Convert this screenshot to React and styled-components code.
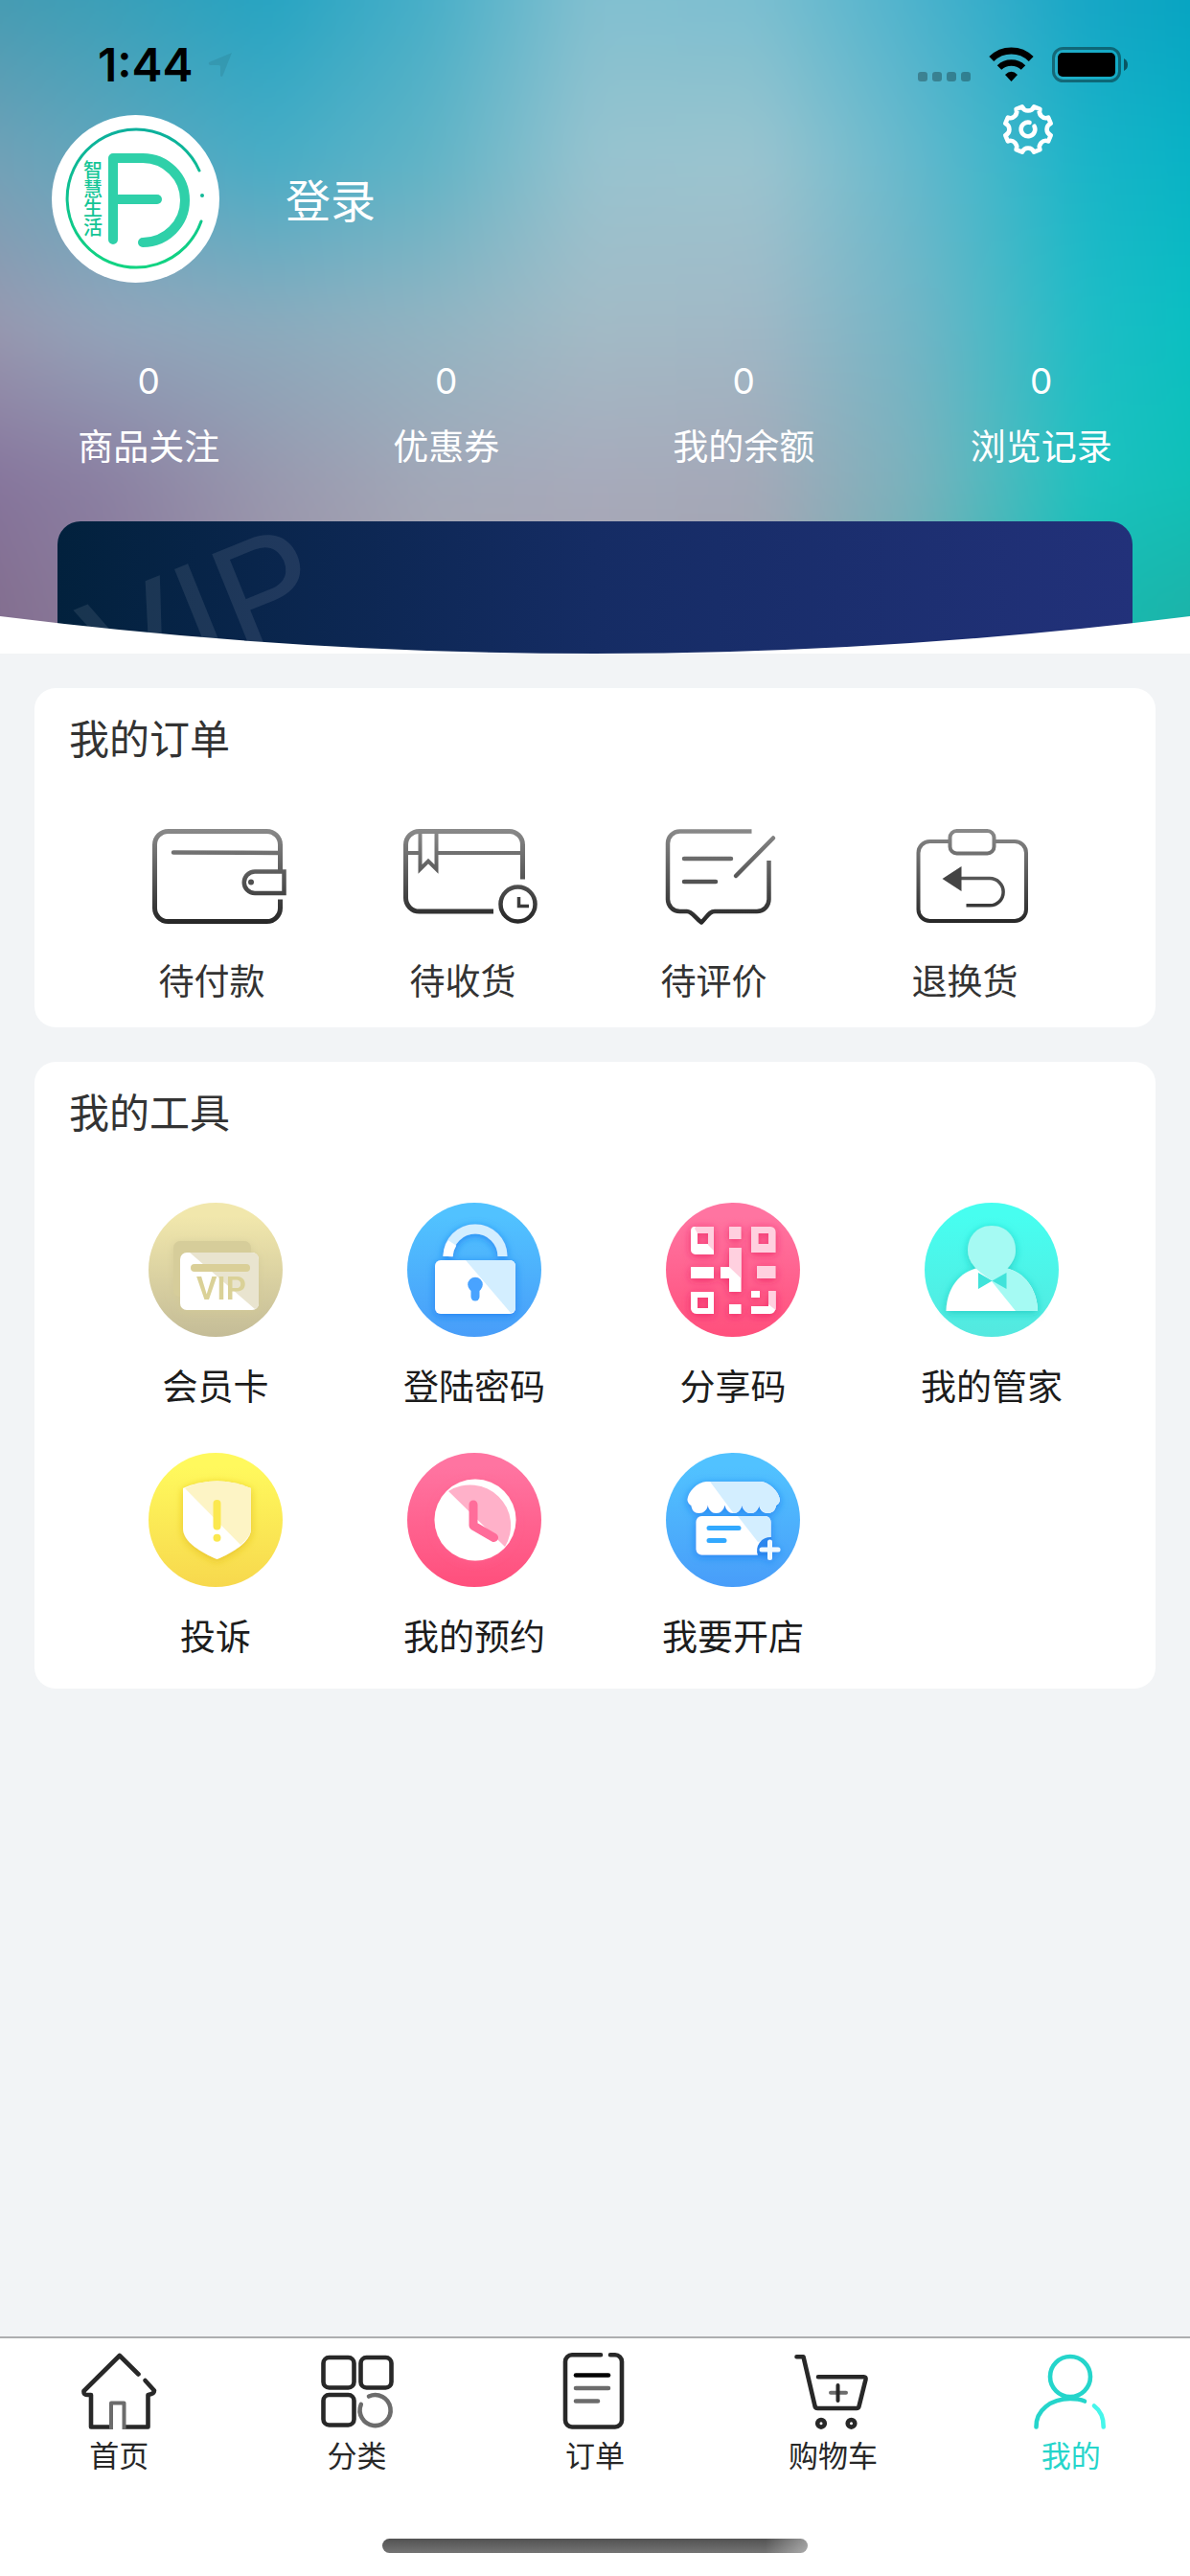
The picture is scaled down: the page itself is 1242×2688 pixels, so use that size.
import React from 'react';
import styled, { createGlobalStyle } from 'styled-components';

const GlobalStyle = createGlobalStyle`
  * {
    box-sizing: border-box;
  }

  body {
    margin: 0;
    background: #f2f4f6;
    color: #333;
    font-family: 'Noto Sans CJK SC', 'Liberation Sans', sans-serif;
  }

  a {
    color: inherit;
    text-decoration: none;
  }

  button {
    padding: 0;
    border: none;
    background: none;
    color: inherit;
    font: inherit;
    cursor: pointer;
  }

  svg {
    display: block;
  }
`;

// Page shell
const Page = styled.div`
  display: flex;
  flex-direction: column;
  min-height: 100vh;
`;

const Header = styled.header`
  position: relative;
  isolation: isolate;
  display: flex;
  flex-direction: column;
  overflow: hidden;
  color: #fff;
`;

// Soft colour field behind the header, larger than it so the blur has no pale edge
const Backdrop = styled.div`
  position: absolute;
  inset: -60px;
  z-index: -1;
  filter: blur(24px);
`;

// One horizontal colour band of the backdrop, faded in from the band above it
const Wash = styled.div`
  position: absolute;
  inset: 0;
  background: linear-gradient(90deg, ${(props) => props.$colors});
  mask-image: linear-gradient(180deg, transparent ${(props) => props.$from}, #000 ${(props) => props.$to});
`;

const StatusBar = styled.div`
  display: flex;
  align-items: center;
  gap: 19px;
  height: 108px;
  padding: 28px 65px 0 102px;
  color: #000;
`;

const Clock = styled.span`
  font-family: Inter, 'Liberation Sans', sans-serif;
  font-size: 48px;
  font-weight: 600;
  line-height: 48px;
`;

const LocationArrow = styled.svg`
  margin: 0 auto 0 -4px;
`;

const Profile = styled.div`
  display: flex;
  align-items: flex-start;
  padding: 0 142px 0 54px;
`;

const Avatar = styled.div`
  flex: none;
  width: 175px;
  height: 175px;
  margin-top: 12px;
  border-radius: 50%;
  background: #fff;
`;

const LoginLink = styled.a`
  margin: 67px auto 0 69px;
  font-size: 47px;
  line-height: 64px;
`;

const Stats = styled.ul`
  display: grid;
  grid-template-columns: repeat(4, 1fr);
  margin: 79px 0 0;
  padding: 0;
  list-style: none;
`;

const Stat = styled.li`
  display: flex;
  flex-direction: column;
  gap: 18px;
  text-align: center;
  font-size: 37px;
  line-height: 48px;
`;

const StatValue = styled.span`
  font-family: Inter, 'Liberation Sans', sans-serif;
`;

const VipCard = styled.div`
  height: 138px;
  margin: 56px 60px 0;
  overflow: hidden;
  border-radius: 24px 24px 0 0;
  background: linear-gradient(90deg, #02213d, #152c64 50%, #22317a);
`;

const Curve = styled.svg`
  position: absolute;
  left: 0;
  bottom: 0;
  width: 100%;
  height: 39px;
`;

const Main = styled.main`
  display: flex;
  flex: 1;
  flex-direction: column;
  gap: 36px;
  padding: 36px;
`;

const Card = styled.section`
  padding: 22px 36px 26px;
  border-radius: 22px;
  background: #fff;
`;

const CardTitle = styled.h2`
  margin: 0 0 67px;
  font-size: 42px;
  font-weight: 400;
  line-height: 58px;
`;

const OrderGrid = styled.div`
  display: grid;
  grid-template-columns: repeat(4, 1fr);
  padding: 0 32px 0 18px;
`;

const OrderItem = styled.a`
  display: flex;
  flex-direction: column;
  align-items: center;
  gap: 33px;
  font-size: 37px;
  line-height: 48px;

  svg {
    margin-left: 16px;
  }
`;

const ToolGrid = styled.div`
  display: grid;
  grid-template-columns: repeat(4, 1fr);
  row-gap: 47px;
  padding: 0 0 6px 18px;
`;

const ToolItem = styled.a`
  display: flex;
  flex-direction: column;
  align-items: center;
  gap: 26px;
  color: #1c1c1c;
  font-size: 37px;
  line-height: 48px;
`;

const TabBar = styled.footer`
  display: flex;
  flex-direction: column;
  align-items: center;
  padding: 15px 0 24px;
  border-top: 2px solid #adaeb0;
  background: #fff;
`;

const Tabs = styled.nav`
  display: grid;
  grid-template-columns: repeat(5, 1fr);
  width: 100%;
`;

const Tab = styled.a`
  display: flex;
  flex-direction: column;
  align-items: center;
  gap: 6px;
  color: ${(props) => (props.$active ? '#25d5cb' : '#282828')};
  font-size: 31px;
  line-height: 40px;
`;

const HomeIndicator = styled.div`
  width: 444px;
  height: 15px;
  margin-top: 68px;
  border-radius: 8px;
  background: linear-gradient(90deg, transparent 90%, rgba(255, 255, 255, 0.4)),
    linear-gradient(180deg, #525252, #747474);
`;

const washes = [
  {
    colors: '#4a9ab0, #3a9fb8, #25a4c2, #48afc8, #83c0d0, #7bbfd0, #4ab2cc, #17a6c6, #00a3c0',
    from: '-1%',
    to: '0%',
  },
  {
    colors: '#7a9fb5, #62a7bd, #48adc6, #62b4c6, #98c3cf, #9cc4cf, #62b8cc, #1ab5c8, #00b2c4',
    from: '7%',
    to: '29%',
  },
  {
    colors: '#9a93ab, #94a4ba, #8cabbd, #92b4c2, #a3bbc6, #a0b8c6, #70b5c6, #1fbdc6, #00c0c0',
    from: '29%',
    to: '50%',
  },
  {
    colors: '#84709a, #8b80a2, #9898ae, #a2a8b8, #a7aabb, #a4a9b8, #78b2bd, #1fc2c0, #08c0b4',
    from: '50%',
    to: '70%',
  },
  {
    colors: '#80698a, #8a7a9a, #9d93a8, #a8a4b0, #a8a4b0, #a2a4b0, #6ab0b4, #16baaf, #20b0a6',
    from: '70%',
    to: '87%',
  },
];

// Gear outline: eight blunt teeth joined by inward arcs
const gearPath = () => {
  const point = (deg) => {
    const a = (deg * Math.PI) / 180;
    return `${(27 + 24.5 * Math.cos(a)).toFixed(2)} ${(27 + 24.5 * Math.sin(a)).toFixed(2)}`;
  };
  let d = '';
  for (let i = 0; i < 8; i++) {
    const mid = 22.5 + i * 45;
    d += `${i === 0 ? 'M' : 'A6.6 6.6 0 0 0 '}${point(mid - 8)}L${point(mid + 8)}`;
  }
  return `${d}A6.6 6.6 0 0 0 ${point(14.5)}Z`;
};

const Logo = () => (
  <svg width="175" height="175" viewBox="0 0 175 175" fill="none">
    <defs>
      <linearGradient id="ring" x1="0" y1="0" x2="0" y2="1">
        <stop offset="0" stopColor="#0cb09c" />
        <stop offset="1" stopColor="#12d482" />
      </linearGradient>
    </defs>
    <path d="M154 58A72 72 0 1 0 156 111" stroke="url(#ring)" strokeWidth="3" strokeLinecap="round" />
    <circle cx="157" cy="84" r="2" fill="#12b998" />
    <g stroke="#2fd0a9" strokeWidth="10" strokeLinecap="round" strokeLinejoin="round">
      <path d="M64 130V45H95A44 44 0 0 1 95 133" />
      <path d="M64 88H110" />
    </g>
    <text x="43" y="47" fill="#14c596" fontSize="20" fontWeight="500" writingMode="vertical-rl">
      智慧生活
    </text>
  </svg>
);

// Order icons share a vertical grey fade
const OrderIcon = ({ id, children }) => (
  <svg
    width="140"
    height="100"
    viewBox="0 0 140 100"
    fill="none"
    stroke={`url(#${id})`}
    strokeWidth="5"
    strokeLinecap="round"
    strokeLinejoin="round"
  >
    <defs>
      <linearGradient id={id} gradientUnits="userSpaceOnUse" x1="0" y1="0" x2="0" y2="99">
        <stop offset="0" stopColor="#8a8a8a" />
        <stop offset="1" stopColor="#262626" />
      </linearGradient>
    </defs>
    {children}
  </svg>
);

const orders = [
  {
    name: '待付款',
    icon: (
      <OrderIcon id="pay">
        <path
          strokeLinecap="butt"
          d="M133.500 43V16.500A14 14 0 0 0 119.500 2.500H16.500A14 14 0 0 0 2.500 16.500V82.500A14 14 0 0 0 16.500 96.500H119.500A14 14 0 0 0 133.500 82.500V73.500"
        />
        <path d="M22 24.500L133 25" strokeWidth="4.500" />
        <path d="M137.500 44.500H107A11.200 11.200 0 0 0 107 67H137.500Z" strokeWidth="4.500" strokeLinejoin="miter" />
        <circle cx="103" cy="55.500" r="3" fill="#505050" stroke="none" />
      </OrderIcon>
    ),
  },
  {
    name: '待收货',
    icon: (
      <OrderIcon id="receive">
        <path
          strokeLinecap="butt"
          d="M124.500 52.500V16.500A14 14 0 0 0 110.500 2.500H16.500A14 14 0 0 0 2.500 16.500V72A14 14 0 0 0 16.500 86H94"
        />
        <path d="M17.500 3V42L26 33.500L34.500 42V3" strokeWidth="4" strokeLinejoin="miter" />
        <path d="M2.500 25H17.500M34.500 25H124" strokeWidth="4" strokeLinecap="butt" />
        <circle cx="119.500" cy="78.500" r="18" strokeWidth="4.500" />
        <path d="M120.500 71V80.500H131" strokeWidth="3.500" strokeLinecap="butt" strokeLinejoin="miter" />
      </OrderIcon>
    ),
  },
  {
    name: '待评价',
    icon: (
      <OrderIcon id="review">
        <path
          strokeWidth="4.500"
          strokeLinecap="butt"
          d="M101.500 2.500H26.500A12.500 12.500 0 0 0 14 15V73.500A12.500 12.500 0 0 0 26.500 86H34C39 86 42 92 49 97.500C55 92 57 86 63 86H107A12.500 12.500 0 0 0 119.500 73.500V33"
        />
        <path d="M31 31H80M31 55H64" strokeWidth="4.500" />
        <path d="M85 49L124 9.500" strokeWidth="4.500" />
      </OrderIcon>
    ),
  },
  {
    name: '退换货',
    icon: (
      <OrderIcon id="refund">
        <path
          strokeWidth="4"
          d="M46 13H25.500A12 12 0 0 0 13.500 25V84A12 12 0 0 0 25.500 96H114A12 12 0 0 0 126 84V25A12 12 0 0 0 114 13H93"
        />
        <rect x="46.500" y="2" width="46" height="23.500" rx="7" strokeWidth="4" />
        <path d="M58 51.500H88A14 14 0 0 1 88 79.800H63.500" strokeWidth="3.500" strokeLinecap="butt" />
        <path d="M38.500 52L58.500 39V65Z" fill="#444" stroke="none" />
      </OrderIcon>
    ),
  },
];

// Round tool badge with its gradient; shade is the colour of the soft shadow
const Badge = ({ id, from, to, shade, children }) => (
  <svg width="140" height="140" viewBox="0 0 140 140" fill="none">
    <defs>
      <linearGradient id={id} x1="0" y1="0" x2="0" y2="1">
        <stop offset="0.1" stopColor={from} />
        <stop offset="1" stopColor={to} />
      </linearGradient>
      <filter id={`${id}-shadow`} x="-20%" y="-20%" width="140%" height="150%">
        <feDropShadow dx="0" dy="2" stdDeviation="4" floodColor={shade} floodOpacity="0.8" />
      </filter>
    </defs>
    <circle cx="70" cy="70" r="70" fill={`url(#${id})`} />
    <g filter={`url(#${id}-shadow)`}>{children}</g>
  </svg>
);

const tools = [
  {
    name: '会员卡',
    icon: (
      <Badge id="vip" from="#f1e7ac" to="#c4bc97" shade="#d2c995">
        <rect x="26" y="40" width="81" height="58" rx="7" fill="#d6cd9a" />
        <rect x="33" y="52" width="82" height="60" rx="7" fill="#fff" />
        <path d="M43 52H108A7 7 0 0 1 115 59V105A7 7 0 0 1 111 111Z" fill="#e9e4cf" />
        <rect x="44" y="64" width="62" height="8" rx="4" fill="#dacf98" />
        <text x="76" y="101" fill="#dad197" fontFamily="Roboto, sans-serif" fontSize="33" fontWeight="600" textAnchor="middle">
          VIP
        </text>
      </Badge>
    ),
  },
  {
    name: '登陆密码',
    icon: (
      <Badge id="lock" from="#51c2ff" to="#489df9" shade="#167cf0">
        <path d="M42.500 56A28.500 28.500 0 0 1 99.500 56" stroke="#d3eeff" strokeWidth="10" />
        <path d="M42.500 56A28.500 28.500 0 0 1 47 42" stroke="#fff" strokeWidth="10" />
        <rect x="29" y="60" width="84" height="56" rx="6" fill="#fff" />
        <path d="M61 60H107A6 6 0 0 1 113 66V110Q113 114 108 115Z" fill="#d3eeff" />
        <circle cx="71" cy="85.500" r="7.800" fill="#4aa3ff" />
        <path d="M71 87V98" stroke="#4aa3ff" strokeWidth="9" strokeLinecap="round" />
      </Badge>
    ),
  },
  {
    name: '分享码',
    icon: (
      <Badge id="share" from="#ff74a1" to="#ff4f7c" shade="#ec2260">
        <g fill="#fff" fillRule="evenodd">
          <path d="M30 25H50V54H31A5 5 0 0 1 26 49V30Q26 25 30 25ZM33 32V43H44V32Z" />
          <path d="M26 67H50V79H26ZM57 67H66V47H78.500V93H66V79H57Z" />
          <path d="M26 93H50V116H32A6 6 0 0 1 26 110ZM33 99V110H44V99Z" />
          <path d="M66 106H78.500V116H66ZM89 92H98V99H89ZM107 92H114.500V110A6 6 0 0 1 108.500 116H89V108H107Z" />
        </g>
        <g fill="#ffd0df" fillRule="evenodd">
          <path d="M30 27L31 25H50V50L44 44V32H33Z" />
          <path d="M66 25H78.500V38H66ZM66 47H78.500V79L66 67Z" />
          <path d="M89 25H109A5.500 5.500 0 0 1 114.500 30.500V52H89ZM96.500 32V43H107V32Z" />
          <path d="M95 66H114.500V79H95ZM107 92H114.500V112L107 106Z" />
        </g>
      </Badge>
    ),
  },
  {
    name: '我的管家',
    icon: (
      <Badge id="butler" from="#47fef0" to="#54e8df" shade="#1cc8be">
        <path d="M22.500 113C23 90 36 72 56 68H84C104 72 117.500 90 118 113Z" fill="#fff" />
        <path d="M70 82L95 113H118C117.500 90 104 72 84 68L70 70Z" fill="#a5faf3" />
        <path d="M70 24C85 24 95 35 95 50C95 63 83 73 70 81C57 73 45 63 45 50C45 35 55 24 70 24Z" fill="#a5faf3" />
        <path d="M56 73L70.500 81.500L85.500 73V90L70.500 81.500L56 90Z" fill="#3fe3da" />
      </Badge>
    ),
  },
  {
    name: '投诉',
    icon: (
      <Badge id="complain" from="#fff95d" to="#f7d84d" shade="#e2bd1c">
        <path d="M36 37Q53 29.500 71.500 29.500Q90 29.500 107 37V79C107 93 88 104 71.500 111C55 104 36 93 36 79Z" fill="#fff" />
        <path d="M38 37Q53 29.500 71.500 29.500Q90 29.500 107 37V79C107 85 103 90 96 96Z" fill="#fdf4c5" />
        <path d="M71.500 53V76.500" stroke="#fbe850" strokeWidth="8" strokeLinecap="round" />
        <circle cx="71.500" cy="88.700" r="4" fill="#fbe850" />
      </Badge>
    ),
  },
  {
    name: '我的预约',
    icon: (
      <Badge id="booking" from="#ff74a1" to="#ff4f7c" shade="#ff5f8e">
        <circle cx="71" cy="70" r="42.500" fill="#fff" />
        <path d="M43 40A42.500 42.500 0 0 1 102 98Z" fill="#ffb1c9" />
        <path d="M69 54V76L90.500 88.500" stroke="#ff6d9a" strokeWidth="9" strokeLinecap="round" strokeLinejoin="round" />
      </Badge>
    ),
  },
  {
    name: '我要开店',
    icon: (
      <Badge id="shop" from="#51c2ff" to="#489df9" shade="#167cf0">
        <path
          d="M42 30H99C109 31 119 42 119 50Q118 53 115 55C114 61 110 63 106.500 63C101 63 98 59 97.300 54.500C96 60 93 63 88.500 63C84 63 81 60 79.300 54.500C78 60 75 63 70.500 63C66 63 63 60 61.500 54.500C60 60 57 63 52.500 63C48 63 45 60 43.700 54.500C43 60 39 63 34.500 63C30 63 27 60 26.500 55Q23 53 22.500 49C23 41 32 31 42 30Z"
          fill="#fff"
        />
        <path
          d="M46 30H99C109 31 119 42 119 50Q118 53 115 55C114 61 110 63 106.500 63C101 63 98 59 97.300 54.500C96 60 93 63 88.500 63C84 63 81 60 79.300 54.500C78 60 75 63 70.500 63Z"
          fill="#d3eeff"
        />
        <rect x="31.500" y="66" width="78" height="40.500" rx="6" fill="#fff" />
        <path d="M75 66H103.500A6 6 0 0 1 109.500 72V90L96 93Z" fill="#d3eeff" />
        <path d="M45 78.500H76M45 91.500H61" stroke="#33a9ff" strokeWidth="5" strokeLinecap="round" />
        <path d="M110 88A14 14 0 0 0 96 107H110Z" fill="#2c86ee" />
        <path d="M108.500 93V109.500M100 101H117" stroke="#f0f9ff" strokeWidth="5" strokeLinecap="round" />
      </Badge>
    ),
  },
];

const TabIcon = ({ children }) => (
  <svg
    width="80"
    height="80"
    viewBox="0 0 80 80"
    fill="none"
    stroke="currentColor"
    strokeWidth="4.600"
    strokeLinecap="round"
    strokeLinejoin="round"
  >
    {children}
  </svg>
);

const tabs = [
  {
    name: '首页',
    icon: (
      <TabIcon>
        <path d="M60.500 22.500L40.800 3L3.500 40Q3 44 7 44H11V77.500H31" />
        <path d="M67.500 29L77 39.500Q77 43 70.500 44V77.500H47" />
        <path d="M32 80V52.500H45.500V80" stroke="#6c6c6c" strokeWidth="4" strokeLinecap="butt" />
      </TabIcon>
    ),
  },
  {
    name: '分类',
    icon: (
      <TabIcon>
        <rect x="4.500" y="5" width="32" height="31.500" rx="6" />
        <rect x="43.500" y="5" width="32" height="31.500" rx="6" />
        <rect x="4.500" y="44" width="32" height="31.500" rx="6" />
        <path d="M52 45.500A16 16 0 1 1 43.800 54" stroke="#6c6c6c" />
      </TabIcon>
    ),
  },
  {
    name: '订单',
    icon: (
      <TabIcon>
        <path d="M46 2.300H16A7 7 0 0 0 9 9.300V70.500A7 7 0 0 0 16 77.500H61A7 7 0 0 0 68 70.500V9.300A7 7 0 0 0 61 2.300H56" />
        <path d="M20 23.500H54" stroke="#000" />
        <path d="M20 37H54M20 50.500H43" stroke="#6c6c6c" />
      </TabIcon>
    ),
  },
  {
    name: '购物车',
    icon: (
      <TabIcon>
        <path d="M2.500 4.300H9.500L21.500 55.500Q22 58 24.500 58H65Q67 58 67.500 56L74.500 28Q75 25.300 72.500 25.300H25" />
        <path d="M38 41.800H54" stroke="#6c6c6c" strokeWidth="4" />
        <path d="M45.500 34V50" strokeWidth="4" />
        <circle cx="28" cy="73.800" r="3.800" />
        <circle cx="59.500" cy="73.800" r="3.800" />
      </TabIcon>
    ),
  },
  {
    name: '我的',
    active: true,
    icon: (
      <TabIcon>
        <circle cx="39" cy="25" r="21" />
        <path d="M3.500 77.500C3 60 19 48 39 48Q48 48 54 50.500" />
        <path d="M64 55.500Q74 63 73.700 77.500" stroke="#46f6eb" />
      </TabIcon>
    ),
  },
];

const stats = [
  { label: '商品关注', value: 0 },
  { label: '优惠券', value: 0 },
  { label: '我的余额', value: 0 },
  { label: '浏览记录', value: 0 },
];

function App() {
  return (
    <Page>
      <GlobalStyle />
      <Header>
        <Backdrop>
          {washes.map((wash) => (
            <Wash key={wash.to} $colors={wash.colors} $from={wash.from} $to={wash.to} />
          ))}
        </Backdrop>

        <StatusBar>
          <Clock>1:44</Clock>
          <LocationArrow width="26" height="26" viewBox="0 0 26 26">
            <path d="M1 10L25 0L15.500 24Q14 26 13 24V14.500Q13 13 11 13H2Q0 12 1 10Z" fill="#000" opacity="0.08" />
          </LocationArrow>
          <svg width="55" height="38" viewBox="0 0 55 38" fill="#000" opacity="0.28">
            <rect x="0" y="26" width="10" height="10" rx="3" />
            <rect x="15" y="26" width="10" height="10" rx="3" />
            <rect x="30" y="26" width="10" height="10" rx="3" />
            <rect x="45" y="26" width="10" height="10" rx="3" />
          </svg>
          <svg width="47" height="38" viewBox="0 0 47 38" fill="none" stroke="#000">
            <path d="M2.800 12.500A29.500 29.500 0 0 1 44.200 12.500" strokeWidth="7" />
            <path d="M11 21.500A18 18 0 0 1 36 21.500" strokeWidth="6.500" />
            <path d="M17 29Q23.500 22.500 30 29L23.500 36Z" fill="#000" stroke="none" />
          </svg>
          <svg width="79" height="38" viewBox="0 0 79 38">
            <rect x="1.500" y="1.500" width="69" height="34" rx="10" fill="none" stroke="#000" strokeWidth="3" opacity="0.4" />
            <rect x="6" y="6" width="60" height="25" rx="5" fill="#000" />
            <path d="M75 12Q79 14 79 18.500Q79 23 75 25Z" fill="#000" opacity="0.5" />
          </svg>
        </StatusBar>

        <Profile>
          <Avatar>
            <Logo />
          </Avatar>
          <LoginLink href="#login">登录</LoginLink>
          <button type="button" aria-label="设置">
            <svg width="54" height="54" viewBox="0 0 54 54" fill="none" stroke="#fff" strokeWidth="4.600" strokeLinejoin="round">
              <path d={gearPath()} />
              <path d="M28.500 19.800A7.300 7.300 0 1 0 33.500 23.700" strokeLinecap="round" />
            </svg>
          </button>
        </Profile>

        <Stats>
          {stats.map((stat) => (
            <Stat key={stat.label}>
              <StatValue>{stat.value}</StatValue>
              <span>{stat.label}</span>
            </Stat>
          ))}
        </Stats>

        <VipCard>
          <svg width="320" height="138" viewBox="0 0 320 138">
            <text
              x="0"
              y="0"
              transform="translate(57 199) rotate(-22)"
              fill="#fff"
              fillOpacity="0.09"
              fontFamily="Roboto, sans-serif"
              fontSize="160"
            >
              VIP
            </text>
          </svg>
        </VipCard>
        <Curve viewBox="0 0 100 39" preserveAspectRatio="none">
          <path d="M0 0Q50 78 100 0V39H0Z" fill="#fff" />
        </Curve>
      </Header>

      <Main>
        <Card>
          <CardTitle>我的订单</CardTitle>
          <OrderGrid>
            {orders.map((order) => (
              <OrderItem key={order.name} href="#orders">
                {order.icon}
                <span>{order.name}</span>
              </OrderItem>
            ))}
          </OrderGrid>
        </Card>

        <Card>
          <CardTitle>我的工具</CardTitle>
          <ToolGrid>
            {tools.map((tool) => (
              <ToolItem key={tool.name} href="#tools">
                {tool.icon}
                <span>{tool.name}</span>
              </ToolItem>
            ))}
          </ToolGrid>
        </Card>
      </Main>

      <TabBar>
        <Tabs>
          {tabs.map((tab) => (
            <Tab key={tab.name} href="#tab" $active={tab.active}>
              {tab.icon}
              <span>{tab.name}</span>
            </Tab>
          ))}
        </Tabs>
        <HomeIndicator />
      </TabBar>
    </Page>
  );
}

export default App;
